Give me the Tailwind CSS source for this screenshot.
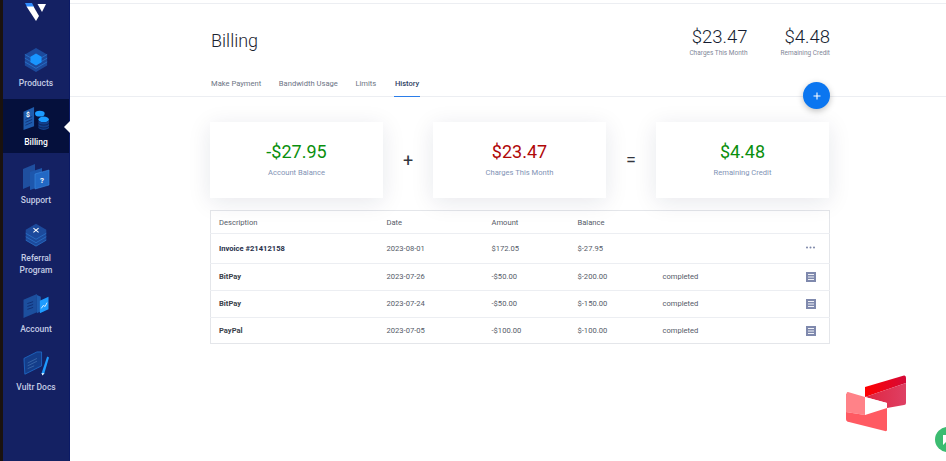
<!doctype html>
<html><head><meta charset="utf-8"><script src="https://cdn.jsdelivr.net/npm/@tailwindcss/browser@4"></script></head>
<body class="bg-white">
<div class="relative flex h-[461px] w-[946px] overflow-hidden bg-white font-['Roboto',sans-serif]">
  <div class="w-[3px] shrink-0 bg-[#1a120e]"></div>
  <aside class="flex h-full w-[67px] shrink-0 flex-col items-center border-r border-[#0b1a66] bg-[#142163] text-[8.5px] font-medium leading-[12px] text-[#c3cbe3]">
    <div class="flex h-[38px] w-full justify-center">
      <svg width="22" height="22" viewBox="0 0 22 22"><path d="M0 3h7l2 4H2z" fill="#2f8cff"/><path d="M1.500 6.500h7L14 16l-3 5z" fill="#fff"/><path d="M12.500 4h8.500l-4 8z" fill="#fff"/></svg>
    </div>
    <div class="flex h-[61px] w-full flex-col items-center">
      <svg width="26" height="26" viewBox="0 0 26 28" class="mt-[9px]"><path d="M13 1 25 8v12l-12 7-12-7V8z" fill="#1c4a9c"/><path d="M1 12l12 7 12-7M1 16l12 7 12-7M1 8l12 7 12-7" fill="none" stroke="#2d78d0" stroke-width=".8"/><path d="M13 7l6 3.500v6L13 20l-6-3.500v-6z" fill="#1896ff"/></svg>
      <span class="mt-[4px]">Products</span>
    </div>
    <div class="relative flex h-[54px] w-full flex-col items-center bg-[#05103c] text-white">
      <svg width="28" height="25" viewBox="0 0 28 26" class="mt-[7px]"><path d="M1 6 12 1v20L1 25z" fill="#1f5cae"/><text x="3.500" y="11" font-size="7" font-weight="700" fill="#fff" font-family="Roboto">$</text><path d="M3 14l7-3M3 17l7-3M3 20l7-3" stroke="#0f2f75" stroke-width=".9"/><ellipse cx="18" cy="8" rx="5" ry="3" fill="#1b9bff"/><ellipse cx="22" cy="14" rx="5.500" ry="3" fill="#1b9bff"/><path d="M16.500 15v8c2 2.500 9 2.500 11 0v-8c-2 2.500-9 2.500-11 0z" fill="#123f8c"/><path d="M16.500 18c2 2.500 9 2.500 11 0M16.500 21c2 2.500 9 2.500 11 0" stroke="#071b4c" fill="none" stroke-width=".8"/></svg>
      <span class="mt-[5px]">Billing</span>
      <div class="absolute right-[-1px] top-[22px] size-0 border-y-[6px] border-r-[6px] border-y-transparent border-r-white"></div>
    </div>
    <div class="flex h-[61px] w-full flex-col items-center">
      <svg width="28" height="28" viewBox="0 0 28 28" class="mt-[10px]"><path d="M1 6l12-5v20L1 26z" fill="#1f4f9f"/><path d="M8 9l12-4v18l-12 4z" fill="#1d57ad"/><path d="M13 11l14-4v15l-14 4z" fill="#2268c4" stroke="#3a8ae0" stroke-width=".6"/><text x="18" y="20" font-size="8" font-weight="700" fill="#fff" font-family="Roboto">?</text></svg>
      <span class="mt-[3px]">Support</span>
    </div>
    <div class="flex h-[70px] w-full flex-col items-center">
      <svg width="26" height="24" viewBox="0 0 26 28" class="mt-[9px]"><path d="M13 1 25 8v12l-12 7-12-7V8z" fill="#1c4a9c"/><path d="M1 12l12 7 12-7M1 16l12 7 12-7M1 20l12 7 12-7" fill="none" stroke="#2d78d0" stroke-width=".8"/><path d="M10 6l6 5M16 6l-6 5" stroke="#fff" stroke-width="1.200"/></svg>
      <span class="mt-[5px] text-center">Referral<br>Program</span>
    </div>
    <div class="flex h-[59px] w-full flex-col items-center">
      <svg width="28" height="25" viewBox="0 0 28 26" class="mt-[9px]"><path d="M1 7l14-6v19L1 26z" fill="#1c4f9e"/><path d="M5 11l6-2M5 14l6-2M5 17l6-2" stroke="#0f2f75"/><path d="M15 2l4 2v15l-4 2z" fill="#1f5cae"/><path d="M18 8l9-4v13l-9 4z" fill="#1e9bff"/><path d="M19.500 16l2-3 2 1 2-4" stroke="#fff" fill="none" stroke-width=".8"/></svg>
      <span class="mt-[5px]">Account</span>
    </div>
    <div class="flex w-full flex-col items-center">
      <svg width="28" height="26" viewBox="0 0 28 28" class="mt-[8px]"><path d="M1 8 15 1h5v15L2 25z" fill="#143d8a" stroke="#2273d2" stroke-width=".8"/><path d="M5 13l10-5M5 16l10-5M5 19l7-3" stroke="#3966a8"/><path d="M26 6l2 1-5 17-2 2-1-2z" fill="#1e9bff"/><path d="M20 24l3 0-2 2.500z" fill="#fff"/></svg>
      <span class="mt-[4px]">Vultr Docs</span>
    </div>
  </aside>
  <main class="flex min-w-0 flex-1 flex-col bg-white">
    <div class="h-[4px] border-b border-[#eceef2]"></div>
    <header class="h-[93px] border-b border-[#eceef2] pl-[140px] pr-[116px]">
      <div class="flex h-[68px] items-start justify-between">
        <h1 class="ml-[1px] mt-[23px] text-[18px] font-light leading-[28px] text-[#1c2430]">Billing</h1>
        <div class="mt-[21px] flex gap-[33px]">
          <div class="text-right"><div class="text-[18.500px] font-light leading-[24px] text-[#141c30]">$23.47</div><div class="text-[6.500px] leading-[8px] text-[#7f8798]">Charges This Month</div></div>
          <div class="text-right"><div class="text-[18.500px] font-light leading-[24px] text-[#141c30]">$4.48</div><div class="text-[6.500px] leading-[8px] text-[#7f8798]">Remaining Credit</div></div>
        </div>
      </div>
      <nav class="flex h-[25px] gap-[17.600px] pl-[1px] text-[7.600px] text-[#6c7484]">
        <a class="flex h-[25px] items-center pb-[1px]">Make Payment</a>
        <a class="flex h-[25px] items-center pb-[1px]">Bandwidth Usage</a>
        <a class="flex h-[25px] items-center pb-[1px]">Limits</a>
        <a class="flex h-[25px] items-center border-b border-[#2b7de9] px-[1px] font-medium text-[#2f3f63]">History</a>
      </nav>
    </header>
    <section class="pl-[140px] pr-[116px] pt-[25px]">
      <div class="flex h-[76px] w-[620px] items-center">
        <div class="flex h-full w-[173px] flex-col items-center bg-white pt-[18px] shadow-[0_4px_22px_rgba(20,30,70,0.10)]"><div class="text-[18px] leading-[24px] text-[#0a8f0e]">-$27.95</div><div class="mt-[4px] text-[7.600px] leading-[10px] text-[#8293b5]">Account Balance</div></div>
        <div class="w-[50px] pt-[2px] text-center text-[18px] leading-none text-[#33363e]">+</div>
        <div class="flex h-full w-[173px] flex-col items-center bg-white pt-[18px] shadow-[0_4px_22px_rgba(20,30,70,0.10)]"><div class="text-[18px] leading-[24px] text-[#b00808]">$23.47</div><div class="mt-[4px] text-[7.600px] leading-[10px] text-[#8293b5]">Charges This Month</div></div>
        <div class="w-[50px] text-center text-[18px] leading-none text-[#33363e]">=</div>
        <div class="flex h-full w-[173px] flex-col items-center bg-white pt-[18px] shadow-[0_4px_22px_rgba(20,30,70,0.10)]"><div class="text-[18px] leading-[24px] text-[#0a8f0e]">$4.48</div><div class="mt-[4px] text-[7.600px] leading-[10px] text-[#8293b5]">Remaining Credit</div></div>
      </div>
      <table class="mt-[12px] w-[620px] table-fixed border border-[#e4e6ea] text-[7.600px] text-[#555b68]">
        <colgroup><col class="w-[176px]"><col class="w-[105px]"><col class="w-[86px]"><col class="w-[85px]"><col class="w-[143px]"><col></colgroup>
        <tbody>
          <tr class="h-[23px] border-b border-[#eceef2]"><td class="pl-[8px] pt-[1px]">Description</td><td class="pt-[1px]">Date</td><td class="pt-[1px]">Amount</td><td class="pt-[1px]">Balance</td><td></td><td></td></tr>
          <tr class="h-[30px] border-b border-[#eceef2]"><td class="pl-[8px] font-bold text-[#27304a]">Invoice #21412158</td><td>2023-08-01</td><td>$172.05</td><td>$-27.95</td><td></td><td><svg width="9" height="3" viewBox="0 0 9 3" class="mb-[3px]"><circle cx="1" cy="1.500" r="1" fill="#7c86a8"/><circle cx="4.500" cy="1.500" r="1" fill="#7c86a8"/><circle cx="8" cy="1.500" r="1" fill="#7c86a8"/></svg></td></tr>
          <tr class="h-[27px] border-b border-[#eceef2]"><td class="pl-[8px] font-bold text-[#3a3f4a]">BitPay</td><td>2023-07-26</td><td>-$50.00</td><td>$-200.00</td><td>completed</td><td><svg width="10" height="10" viewBox="0 0 10 10" class="block"><rect width="10" height="10" fill="#7f89ad"/><path d="M2 2.500h6M2 5h6M2 7.500h6" stroke="#f0f1f6" stroke-width="1"/></svg></td></tr>
          <tr class="h-[27px] border-b border-[#eceef2]"><td class="pl-[8px] font-bold text-[#3a3f4a]">BitPay</td><td>2023-07-24</td><td>-$50.00</td><td>$-150.00</td><td>completed</td><td><svg width="10" height="10" viewBox="0 0 10 10" class="block"><rect width="10" height="10" fill="#7f89ad"/><path d="M2 2.500h6M2 5h6M2 7.500h6" stroke="#f0f1f6" stroke-width="1"/></svg></td></tr>
          <tr class="h-[26px]"><td class="pl-[8px] font-bold text-[#3a3f4a]">PayPal</td><td>2023-07-05</td><td>-$100.00</td><td>$-100.00</td><td>completed</td><td><svg width="10" height="10" viewBox="0 0 10 10" class="block"><rect width="10" height="10" fill="#7f89ad"/><path d="M2 2.500h6M2 5h6M2 7.500h6" stroke="#f0f1f6" stroke-width="1"/></svg></td></tr>
        </tbody>
      </table>
    </section>
  </main>
  <button class="absolute left-[803px] top-[82px] flex size-[27px] items-center justify-center rounded-full bg-[#0b76f0] shadow-[0_2px_6px_rgba(0,0,0,0.25)]"><svg width="8" height="8" viewBox="0 0 8 8"><path d="M4 .5v7M.5 4h7" stroke="#fff" stroke-width="1.100"/></svg></button>
  <svg class="absolute left-[846px] top-[375px]" width="61" height="58" viewBox="0 0 61 58">
    <defs><linearGradient id="a" x1="0" x2="1" y1="0" y2="0"><stop offset="0" stop-color="#ff0000"/><stop offset="1" stop-color="#d40a38"/></linearGradient><linearGradient id="b" x1="0" x2="1" y1="0" y2="0"><stop offset="0" stop-color="#e02540"/><stop offset="1" stop-color="#de4064"/></linearGradient></defs>
    <path d="M19 12 58 .5Q60 0 60 3V8L19 22Z" fill="url(#a)"/>
    <path d="M19 22 60 8V28Q60 30 58 30L41 33V28Z" fill="url(#b)"/>
    <path d="M1 18Q0 17 2 17L19 22V40L0 37V19Z" fill="#ff8288"/>
    <path d="M19 22 41 28V33L19 40Z" fill="#fff"/>
    <path d="M0 37 19 40 41 33V55Q41 56.500 39 56L3 47Q0 46.500 0 44Z" fill="#ff5a62"/>
  </svg>
  <div class="absolute left-[935px] top-[427px] flex size-[25px] items-center justify-start rounded-full bg-[#3cbc71] pl-[8px]"><svg width="8" height="10" viewBox="0 0 8 10"><path d="M0 0h8v7H3L0 10z" fill="#fff"/></svg></div>
</div>
</body></html>
